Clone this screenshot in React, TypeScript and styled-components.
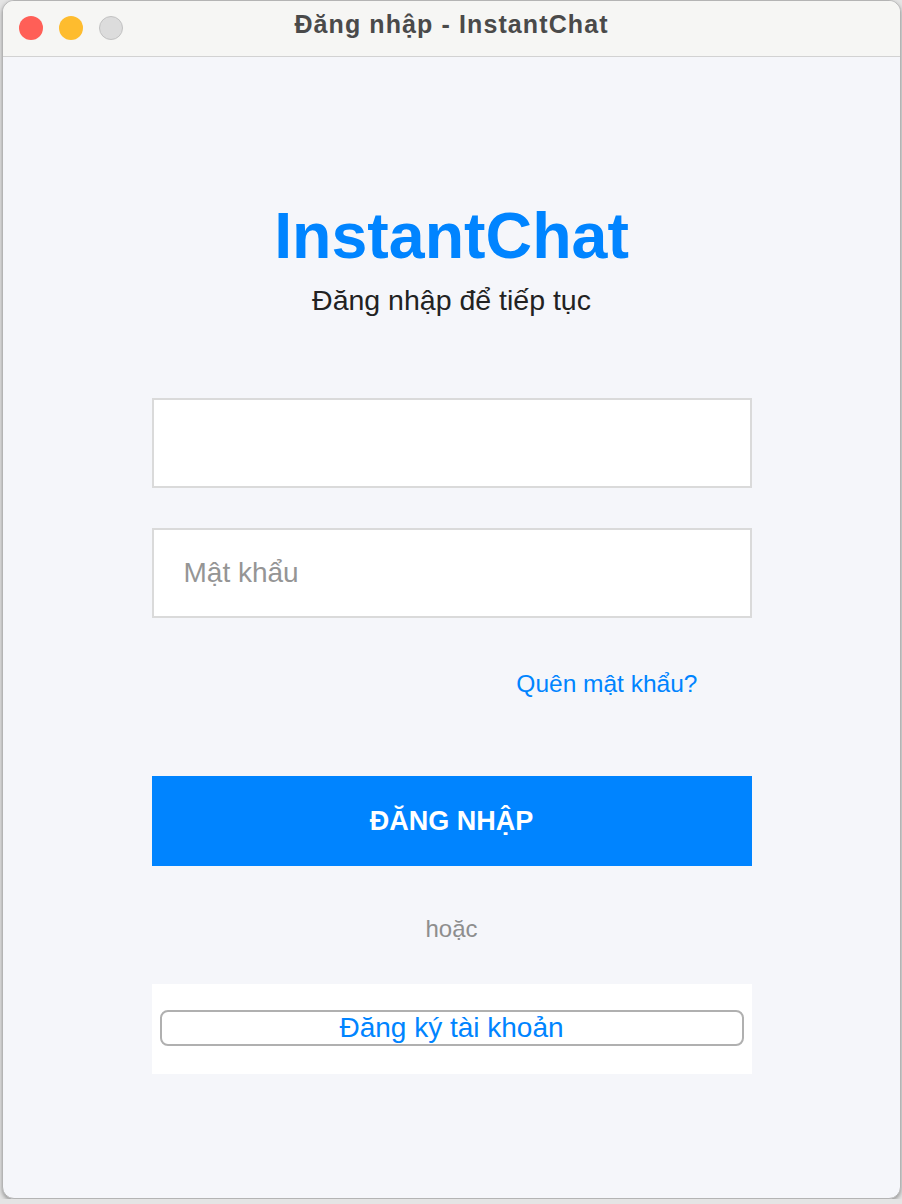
import styled, { createGlobalStyle } from "styled-components";

const GlobalStyle = createGlobalStyle`
  html, body {
    margin: 0;
    padding: 0;
    background: #e4e4e4;
  }
  * {
    box-sizing: border-box;
  }
`;

const Window = styled.div`
  margin-left: 2px;
  width: 899px;
  height: 1199px;
  border: 1px solid #b4b4b4;
  border-radius: 12px;
  overflow: hidden;
  background: #f5f6fa;
  box-shadow: 0 2px 4px rgba(0, 0, 0, 0.35);
  display: flex;
  flex-direction: column;
  font-family: "Liberation Sans", Arial, sans-serif;
`;

const TitleBar = styled.div`
  position: relative;
  height: 56px;
  flex-shrink: 0;
  background: #f6f6f4;
  border-bottom: 1px solid #d2d2d2;
  display: flex;
  align-items: center;
  justify-content: center;
`;

const Lights = styled.div`
  position: absolute;
  left: 16px;
  top: 15px;
  display: flex;
  gap: 16px;
`;

const Light = styled.span<{ $color: string; $ring?: string }>`
  width: 24px;
  height: 24px;
  border-radius: 50%;
  background: ${(p) => p.$color};
  border: 1px solid ${(p) => p.$ring || "transparent"};
`;

const WindowTitle = styled.div`
  padding-bottom: 8px;
  font-size: 25px;
  font-weight: bold;
  letter-spacing: 1.1px;
  color: #4a4a4a;
`;

const Body = styled.div`
  flex: 1;
  display: flex;
  flex-direction: column;
  align-items: center;
  padding-top: 143px;
`;

const Brand = styled.h1`
  margin: 0;
  font-size: 64.5px;
  line-height: 72px;
  font-weight: bold;
  color: #0084ff;
`;

const Subtitle = styled.p`
  margin: 12px 0 0;
  font-size: 28.5px;
  line-height: 32px;
  color: #222;
`;

const Form = styled.div`
  width: 600px;
  margin-top: 82px;
  display: flex;
  flex-direction: column;
`;

const Field = styled.input`
  height: 90px;
  margin: 0;
  padding: 0 30px;
  border: 2px solid #dadada;
  border-radius: 0;
  background: #fff;
  font-family: "Liberation Sans", Arial, sans-serif;
  font-size: 28px;
  color: #222;
  outline: none;
  & + & {
    margin-top: 40px;
  }
  &::placeholder {
    color: #959595;
  }
`;

const ForgotRow = styled.div`
  margin-top: 52px;
  padding-right: 54px;
  display: flex;
  justify-content: flex-end;
`;

const LinkText = styled.a`
  font-size: 24.5px;
  line-height: 28px;
  color: #0084ff;
  text-decoration: none;
`;

const PrimaryButton = styled.button`
  margin-top: 78px;
  height: 90px;
  border: none;
  background: #0084ff;
  color: #fff;
  font-family: "Liberation Sans", Arial, sans-serif;
  font-size: 27px;
  font-weight: bold;
  padding-top: 2px;
`;

const Divider = styled.div`
  margin-top: 49px;
  text-align: center;
  font-size: 24px;
  line-height: 28px;
  color: #8e8e8e;
`;

const RegisterPanel = styled.div`
  margin-top: 41px;
  height: 90px;
  background: #fff;
  padding: 26px 8px 0;
`;

const RegisterButton = styled.button`
  width: 100%;
  height: 36px;
  border: 2px solid #b0b0b0;
  border-radius: 8px;
  background: #fff;
  color: #0084ff;
  font-family: "Liberation Sans", Arial, sans-serif;
  font-size: 28px;
  line-height: 30px;
  padding: 0;
`;

export default function App() {
  return (
    <>
      <GlobalStyle />
      <Window>
        <TitleBar>
          <Lights>
            <Light $color="#ff5f57" />
            <Light $color="#febc2e" />
            <Light $color="#dcdcdc" $ring="#c2c2c2" />
          </Lights>
          <WindowTitle>Đăng nhập - InstantChat</WindowTitle>
        </TitleBar>
        <Body>
          <Brand>InstantChat</Brand>
          <Subtitle>Đăng nhập để tiếp tục</Subtitle>
          <Form>
            <Field type="text" />
            <Field type="password" placeholder="Mật khẩu" />
            <ForgotRow>
              <LinkText href="#">Quên mật khẩu?</LinkText>
            </ForgotRow>
            <PrimaryButton>ĐĂNG NHẬP</PrimaryButton>
            <Divider>hoặc</Divider>
            <RegisterPanel>
              <RegisterButton>Đăng ký tài khoản</RegisterButton>
            </RegisterPanel>
          </Form>
        </Body>
      </Window>
    </>
  );
}
